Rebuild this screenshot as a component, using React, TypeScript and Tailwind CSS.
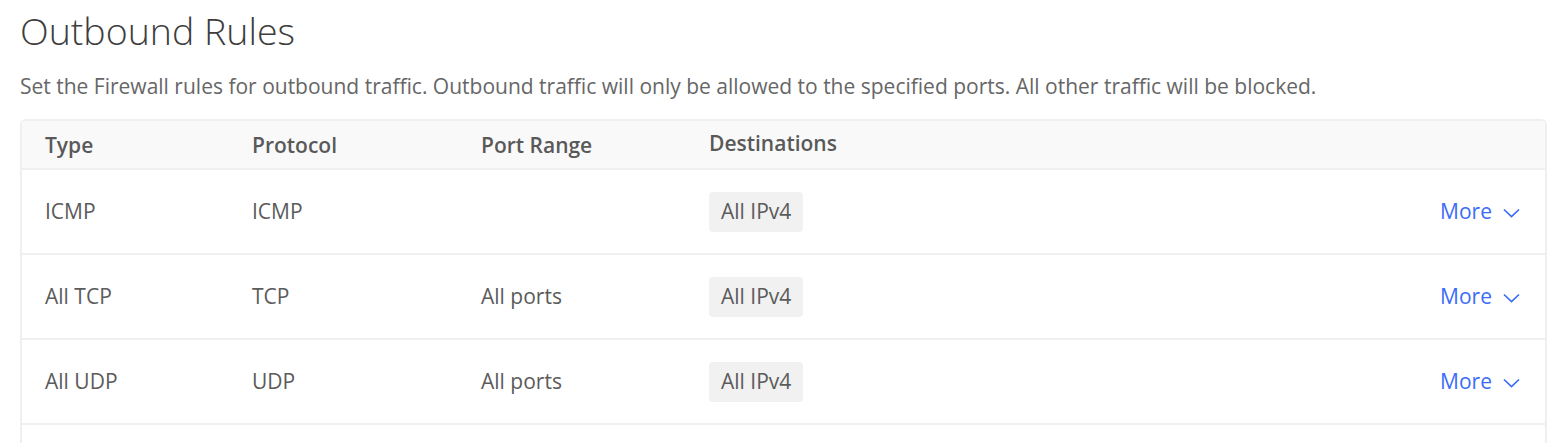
const rules = [
  { type: "ICMP", protocol: "ICMP", ports: "", dest: "All IPv4" },
  { type: "All TCP", protocol: "TCP", ports: "All ports", dest: "All IPv4" },
  { type: "All UDP", protocol: "UDP", ports: "All ports", dest: "All IPv4" },
];

function Chevron() {
  return (
    <svg width="17" height="10" viewBox="0 0 17 10" fill="none" className="mt-[2px]">
      <polyline points="1,1.5 8.5,8.5 16,1.5" stroke="currentColor" strokeWidth="1.7" />
    </svg>
  );
}

function RuleRow({ rule }: { rule: (typeof rules)[number] }) {
  return (
    <div className="flex h-[85px] items-center border-t-2 border-[#efefef] text-[21px] text-[#5b5b5b]">
      <div className="w-[230px] pl-[23px]">{rule.type}</div>
      <div className="w-[229px]">{rule.protocol}</div>
      <div className="w-[228px]">{rule.ports}</div>
      <div className="flex-1">
        <span className="inline-flex h-[40px] items-center rounded-[4px] bg-[#f1f1f1] px-[12px]">
          {rule.dest}
        </span>
      </div>
      <button className="mr-[25px] flex items-center gap-[11px] text-[#3b6cf7]">
        More
        <Chevron />
      </button>
    </div>
  );
}

export default function App() {
  return (
    <div className="min-h-screen bg-white pl-[20px] pr-[6px] pt-[8px] font-['Open_Sans',sans-serif]">
      <h1 className="text-[37.5px] font-light leading-[46px] text-[#3d3d3d]">Outbound Rules</h1>
      <p className="mt-[18px] text-[21px] leading-[28px] text-[#666666]">
        Set the Firewall rules for outbound traffic. Outbound traffic will only be allowed to the
        specified ports. All other traffic will be blocked.
      </p>

      <div className="mt-[19px] rounded-t-[6px] border-2 border-b-0 border-[#efefef]">
        {/* header */}
        <div className="flex h-[47px] items-center rounded-t-[6px] bg-[#f9f9f9] text-[21px] font-semibold text-[#595959]">
          <div className="w-[230px] pl-[23px] pt-[3px]">Type</div>
          <div className="w-[229px] pt-[3px]">Protocol</div>
          <div className="w-[228px] pt-[3px]">Port Range</div>
          <div className="flex-1 pb-[2px]">Destinations</div>
        </div>

        {rules.map((r) => (
          <RuleRow key={r.type} rule={r} />
        ))}
        <div className="h-[40px] border-t-2 border-[#efefef]" />
      </div>
    </div>
  );
}
